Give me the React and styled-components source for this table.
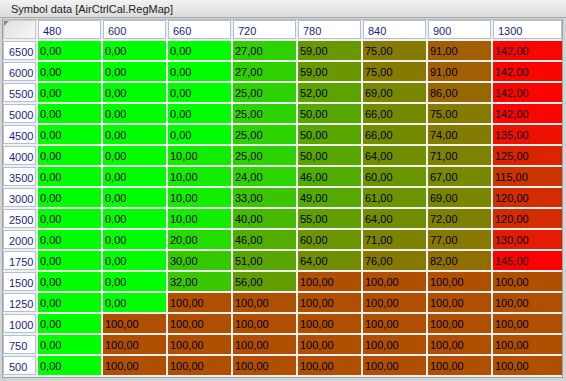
import React from 'react'
import styled, { createGlobalStyle } from 'styled-components'

const cols = ['480', '600', '660', '720', '780', '840', '900', '1300']

const rows = [
    ['6500', [0, 0, 0, 27, 59, 75, 91, 142]],
    ['6000', [0, 0, 0, 27, 59, 75, 91, 142]],
    ['5500', [0, 0, 0, 25, 52, 69, 86, 142]],
    ['5000', [0, 0, 0, 25, 50, 66, 75, 142]],
    ['4500', [0, 0, 0, 25, 50, 66, 74, 135]],
    ['4000', [0, 0, 10, 25, 50, 64, 71, 125]],
    ['3500', [0, 0, 10, 24, 46, 60, 67, 115]],
    ['3000', [0, 0, 10, 33, 49, 61, 69, 120]],
    ['2500', [0, 0, 10, 40, 55, 64, 72, 120]],
    ['2000', [0, 0, 20, 46, 60, 71, 77, 130]],
    ['1750', [0, 0, 30, 51, 64, 76, 82, 145]],
    ['1500', [0, 0, 32, 56, 100, 100, 100, 100]],
    ['1250', [0, 0, 100, 100, 100, 100, 100, 100]],
    ['1000', [0, 100, 100, 100, 100, 100, 100, 100]],
    ['750', [0, 100, 100, 100, 100, 100, 100, 100]],
    ['500', [0, 100, 100, 100, 100, 100, 100, 100]],
]

const MAX = 145

const heat = v => {
    const r = Math.round((v / MAX) * 255)
    return `rgb(${r}, ${255 - r}, 0)`
}

const fmt = v => v.toFixed(2).replace('.', ',')

const App = () => {
    return (
        <>
            <Global />
            <WINDOW>
                <TITLEBAR>Symbol data [AirCtrlCal.RegMap]</TITLEBAR>
                <PANEL>
                    <GRID>
                        <CORNER />
                        {cols.map(c => <COLHEAD key={c}>{c}</COLHEAD>)}
                        {rows.map(([rpm, vals]) => (
                            <React.Fragment key={rpm}>
                                <ROWHEAD>{rpm}</ROWHEAD>
                                {vals.map((v, i) => (
                                    <CELL key={i} $v={v}>{fmt(v)}</CELL>
                                ))}
                            </React.Fragment>
                        ))}
                    </GRID>
                </PANEL>
            </WINDOW>
        </>
    )
}

export default App

const Global = createGlobalStyle`
    html, body {
        margin: 0;
        padding: 0;
        background: #d6d6d6;
    }
    * { box-sizing: border-box; }
`

const WINDOW = styled.div`
    width: 566px;
    height: 381px;
    display: flex;
    flex-direction: column;
    background: #d4d4d4;
    font-family: 'Liberation Sans', Arial, sans-serif;
    font-size: 11px;
    overflow: hidden;
`

const TITLEBAR = styled.div`
    height: 18px;
    padding-left: 11px;
    display: flex;
    align-items: center;
    color: #222;
    background: linear-gradient(#f2f2f2, #dcdcdc);
    border-bottom: 1px solid #a8a8a8;
`

const PANEL = styled.div`
    margin: 1px 3px 3px 2px;
    flex: 1;
    background: #f0f0f0;
    border: 1px solid #a0a0a0;
    border-top-color: #b8b8b8;
`

const GRID = styled.div`
    display: grid;
    grid-template-columns: 33px repeat(7, 63px) 1fr;
    grid-auto-rows: 19px;
    gap: 2px;
`

const CORNER = styled.div`
    position: relative;
    background: linear-gradient(135deg, #e0e0e0, #f7f7f7);
    border: 1px solid #c8c8c8;

    &::before {
        content: '';
        position: absolute;
        left: 0;
        top: 0;
        border-top: 5px solid #8a8a8a;
        border-right: 5px solid transparent;
    }
`

const COLHEAD = styled.div`
    display: flex;
    align-items: center;
    padding: 2px 0 0 4px;
    background: #fff;
    border: 1px solid #aec0da;
    color: #1c1c8c;
`

const ROWHEAD = styled(COLHEAD)`
    padding-left: 5px;
`

const CELL = styled.div`
    display: flex;
    align-items: center;
    padding: 1px 0 0 2px;
    background: ${p => heat(p.$v)};
    color: #000;
`
